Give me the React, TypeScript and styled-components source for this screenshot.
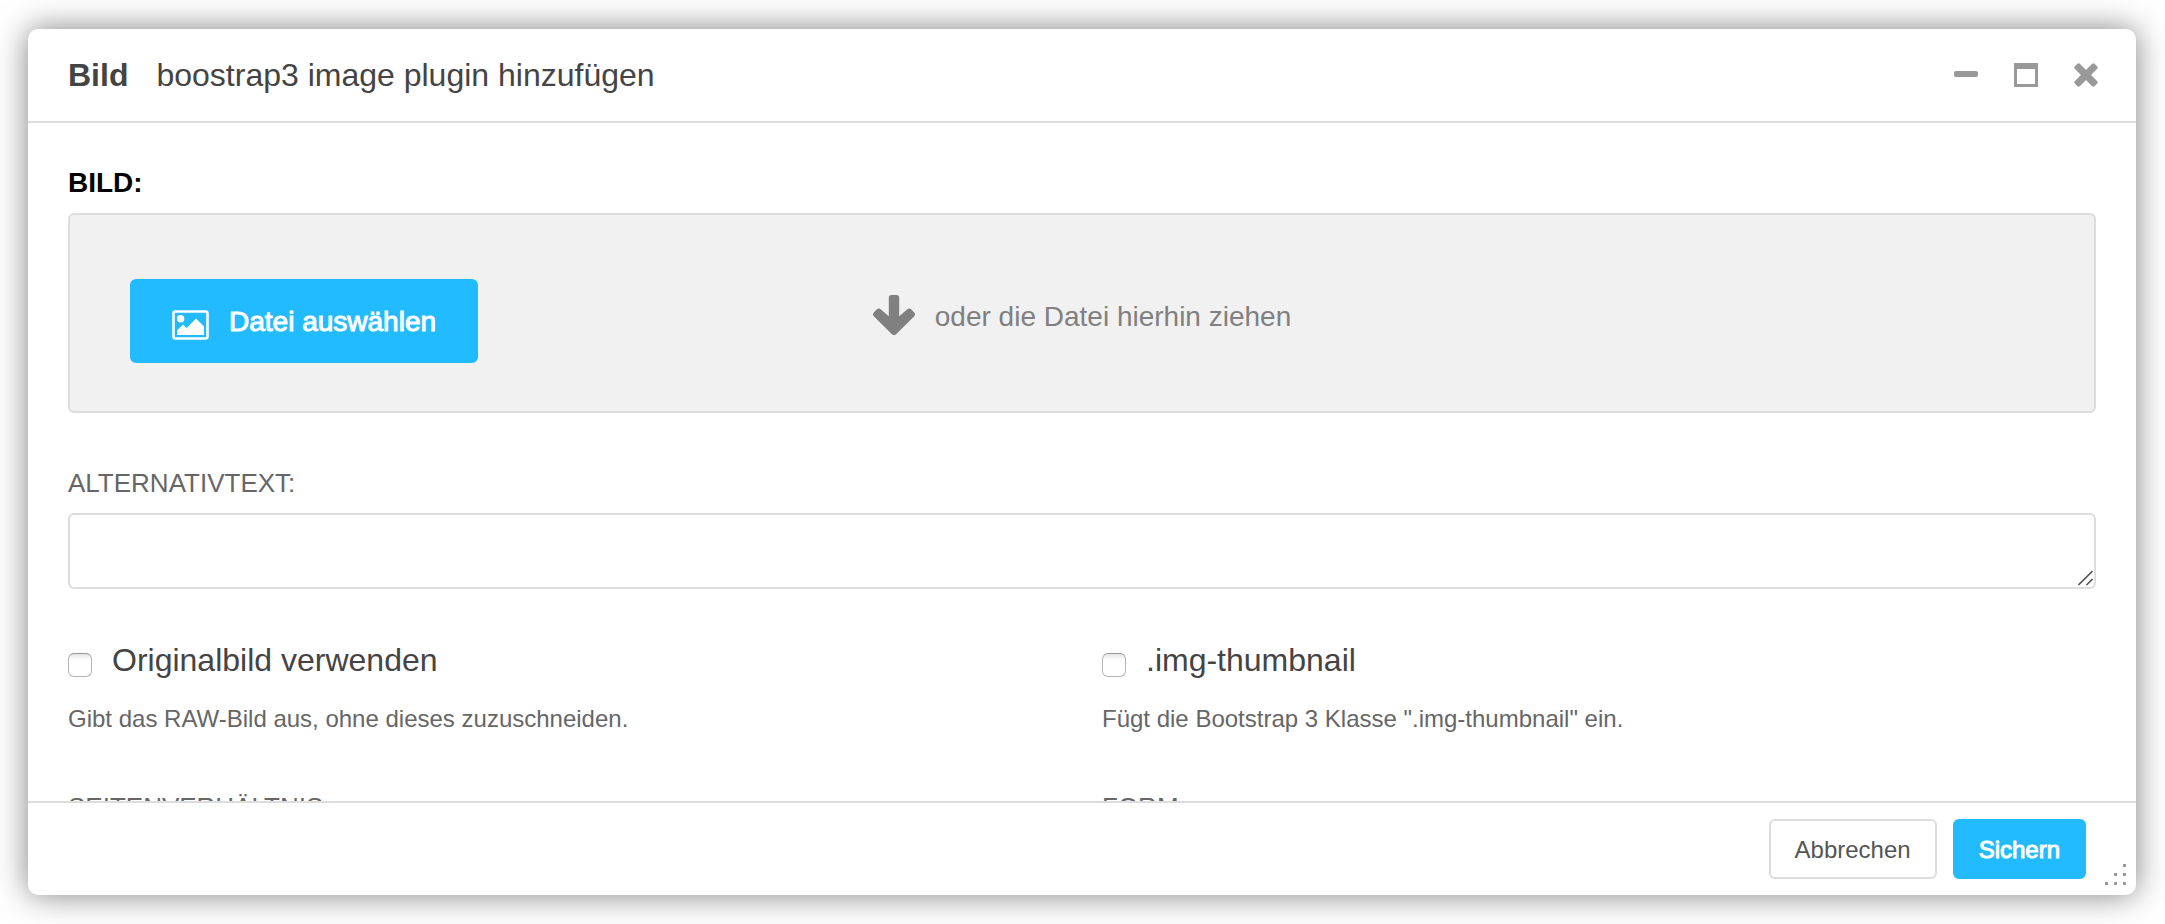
import React from 'react';
import styled, { createGlobalStyle } from 'styled-components';

const GlobalStyle = createGlobalStyle`
  *, *::before, *::after { box-sizing: border-box; }
  body {
    margin: 0;
    background: #fff;
    color: #444;
    font-family: "Liberation Sans", Arial, Helvetica, sans-serif;
  }
  button, textarea, select { font-family: inherit; }
`;

const Page = styled.div`
  display: flex;
  height: 100vh;
  padding: 29px 29px 29px 28px;
  overflow: hidden;
`;

const Dialog = styled.section`
  position: relative;
  display: flex;
  flex-direction: column;
  flex: 1;
  min-width: 0;
  background: #fff;
  border-radius: 10px;
  box-shadow: 0 0 32px rgba(0, 0, 0, 0.5);
`;

const Header = styled.header`
  display: flex;
  align-items: center;
  justify-content: space-between;
  flex: none;
  height: 94px;
  padding: 0 38px 0 40px;
  border-bottom: 2px solid #ddd;
`;

const Title = styled.h1`
  display: flex;
  gap: 28px;
  margin: 0;
  font-size: 32px;
  line-height: 40px;
  font-weight: 400;
`;

const WindowControls = styled.div`
  display: flex;
  gap: 36px;
`;

const IconButton = styled.button`
  display: block;
  width: 24px;
  height: 24px;
  padding: 0;
  border: 0;
  background: none;
  color: #999;
  cursor: pointer;

  svg { display: block; }
`;

const Body = styled.form`
  display: flex;
  flex-direction: column;
  flex: 1;
  min-height: 0;
  padding: 44px 40px 0;
  gap: 54px;
  overflow-y: auto;
  scrollbar-width: none;
`;

const Field = styled.div`
  display: flex;
  flex-direction: column;
  flex: none;
  gap: 14px;
`;

const Label = styled.label<{ $required?: boolean }>`
  font-size: ${(p) => (p.$required ? 28 : 26)}px;
  line-height: 32px;
  font-weight: ${(p) => (p.$required ? 700 : 400)};
  color: ${(p) => (p.$required ? '#000' : '#666')};
  text-transform: uppercase;
`;

const DropZone = styled.div`
  display: grid;
  grid-template-columns: 1fr auto 1fr;
  align-items: center;
  height: 200px;
  padding: 16px 60px 0;
  border: 2px solid #ddd;
  border-radius: 6px;
  background: #f1f1f1;
`;

const Button = styled.button<{ $primary?: boolean; $large?: boolean }>`
  display: flex;
  align-items: center;
  justify-self: start;
  gap: 20px;
  height: ${(p) => (p.$large ? 84 : 60)}px;
  padding: 2px ${(p) => (p.$large ? 40 : 24)}px 0;
  border: 2px solid ${(p) => (p.$primary ? '#22bbff' : '#ddd')};
  border-radius: 6px;
  background: ${(p) => (p.$primary ? '#22bbff' : '#fff')};
  color: ${(p) => (p.$primary ? '#fff' : '#555')};
  font-size: ${(p) => (p.$large ? 28 : 24)}px;
  line-height: 32px;
  white-space: nowrap;
  -webkit-text-stroke: ${(p) => (p.$primary ? '1px' : '0')};
  cursor: pointer;

  svg { flex: none; margin-top: 6px; }
`;

const DropHint = styled.div`
  display: flex;
  align-items: center;
  gap: 20px;
  padding-bottom: 8px;
  color: #808080;
  font-size: 28px;
  line-height: 32px;
  white-space: nowrap;

  svg { flex: none; margin-bottom: 4px; }
`;

const TextAreaFrame = styled.div`
  position: relative;
  display: flex;
`;

const TextArea = styled.textarea`
  flex: 1;
  height: 76px;
  padding: 12px;
  border: 2px solid #ddd;
  border-radius: 6px;
  background: #fff;
  color: #444;
  font-size: 28px;
  outline: none;
  resize: none;
`;

const TextAreaGrip = styled.svg`
  position: absolute;
  right: 3px;
  bottom: 3px;
`;

const Columns = styled.div`
  display: grid;
  grid-template-columns: 1fr 1fr;
  flex: none;
  gap: 40px;
`;

const Option = styled.div`
  display: flex;
  flex-direction: column;
  gap: 26px;
  padding-bottom: 2px;
`;

const OptionLabel = styled.label`
  display: flex;
  align-items: center;
  gap: 20px;
  font-size: 32px;
  line-height: 34px;
`;

const Checkbox = styled.input`
  appearance: none;
  flex: none;
  width: 24px;
  height: 24px;
  margin: 10px 0 0;
  border: 1px solid #b4b4b4;
  border-top-color: #999;
  border-radius: 6px;
  background: linear-gradient(#e4e4e4, #fff 6px);
`;

const Help = styled.p`
  margin: 0;
  color: #666;
  font-size: 24px;
  line-height: 32px;
`;

const Select = styled.select`
  height: 60px;
  border: 2px solid #ddd;
  border-radius: 6px;
  background: #fff;
`;

const Footer = styled.footer`
  display: flex;
  align-items: center;
  justify-content: flex-end;
  flex: none;
  gap: 16px;
  height: 94px;
  padding: 0 50px;
  border-top: 2px solid #ddd;
`;

const ResizeGrip = styled.svg`
  position: absolute;
  right: 10px;
  bottom: 10px;
`;

const MinimizeIcon = () => (
  <svg width="24" height="24" viewBox="0 0 24 24" fill="currentColor" aria-hidden="true">
    <rect y="8" width="24" height="6" rx="2" />
  </svg>
);

const MaximizeIcon = () => (
  <svg width="24" height="24" viewBox="0 0 24 24" fill="currentColor" fillRule="evenodd" aria-hidden="true">
    <path d="M0 0h24v24H0zM3 6v15h18V6z" />
  </svg>
);

const CloseIcon = () => (
  <svg width="24" height="24" viewBox="0 0 24 24" fill="currentColor" aria-hidden="true">
    <rect x="-2" y="8.4" width="28" height="7.2" rx="2" transform="rotate(45 12 12)" />
    <rect x="-2" y="8.4" width="28" height="7.2" rx="2" transform="rotate(-45 12 12)" />
  </svg>
);

const PictureIcon = () => (
  <svg width="37" height="30" viewBox="0 0 37 30" aria-hidden="true">
    <rect x="1.5" y="1.5" width="34" height="27" rx="2" fill="none" stroke="currentColor" strokeWidth="2.6" />
    <circle cx="8.6" cy="8.8" r="3.7" fill="currentColor" />
    <path d="M5 25v-4.500l6-6 3.500 3.500 9.500-9.500 8 8V25z" fill="currentColor" />
  </svg>
);

const ArrowIcon = () => (
  <svg width="42" height="40" viewBox="0 0 42 40" fill="currentColor" aria-hidden="true">
    <path d="M18.500 0h5a2.700 2.700 0 0 1 2.700 2.700v18.600l7.800-6.800a3.400 3.400 0 0 1 4.400 0l2.600 2.700a3.200 3.200 0 0 1 0 4.400L23.300 39a3.300 3.300 0 0 1-4.600 0L1 21.600a3.200 3.200 0 0 1 0-4.400l2.600-2.700a3.400 3.400 0 0 1 4.400 0l7.800 6.800V2.700A2.700 2.700 0 0 1 18.500 0z" />
  </svg>
);

export default function App() {
  return (
    <>
      <GlobalStyle />
      <Page>
        <Dialog role="dialog" aria-labelledby="dialog-title">
          <Header>
            <Title id="dialog-title">
              <strong>Bild</strong>
              <span>boostrap3 image plugin hinzufügen</span>
            </Title>
            <WindowControls>
              <IconButton type="button"><MinimizeIcon /></IconButton>
              <IconButton type="button"><MaximizeIcon /></IconButton>
              <IconButton type="button"><CloseIcon /></IconButton>
            </WindowControls>
          </Header>

          <Body id="image-form">
            <Field>
              <Label htmlFor="choose-file" $required>Bild:</Label>
              <DropZone>
                <Button id="choose-file" type="button" $primary $large>
                  <PictureIcon />
                  Datei auswählen
                </Button>
                <DropHint>
                  <ArrowIcon />
                  oder die Datei hierhin ziehen
                </DropHint>
              </DropZone>
            </Field>

            <Field>
              <Label htmlFor="alt-text">Alternativtext:</Label>
              <TextAreaFrame>
                <TextArea id="alt-text" />
                <TextAreaGrip width="15" height="16" viewBox="0 0 15 16" stroke="#555" strokeWidth="1.6" aria-hidden="true">
                  <path d="M0.500 15L14.500 1M8.500 15L14.500 9" />
                </TextAreaGrip>
              </TextAreaFrame>
            </Field>

            <Columns>
              <Option>
                <OptionLabel>
                  <Checkbox type="checkbox" />
                  Originalbild verwenden
                </OptionLabel>
                <Help>Gibt das RAW-Bild aus, ohne dieses zuzuschneiden.</Help>
              </Option>
              <Option>
                <OptionLabel>
                  <Checkbox type="checkbox" />
                  .img-thumbnail
                </OptionLabel>
                <Help>Fügt die Bootstrap 3 Klasse ".img-thumbnail" ein.</Help>
              </Option>
            </Columns>

            <Columns>
              <Field>
                <Label htmlFor="ratio">Seitenverhältnis:</Label>
                <Select id="ratio" />
              </Field>
              <Field>
                <Label htmlFor="shape">Form:</Label>
                <Select id="shape" />
              </Field>
            </Columns>
          </Body>

          <Footer>
            <Button type="button">Abbrechen</Button>
            <Button type="submit" form="image-form" $primary>Sichern</Button>
          </Footer>
          <ResizeGrip width="21" height="21" viewBox="0 0 21 21" fill="#999" aria-hidden="true">
            <path d="M18 0h3v3h-3zM9 9h3v3H9zM18 9h3v3h-3zM0 18h3v3H0zM9 18h3v3H9zM18 18h3v3h-3z" />
          </ResizeGrip>
        </Dialog>
      </Page>
    </>
  );
}
